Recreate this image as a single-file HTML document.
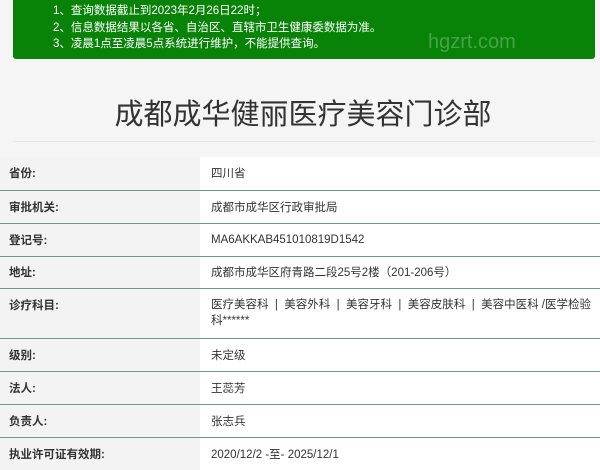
<!DOCTYPE html>
<html><head><meta charset="utf-8"><style>
body{margin:0;width:600px;height:463px;overflow:hidden;background:#f5f5f5;font-family:"Liberation Sans","Noto Sans CJK SC",sans-serif;}
td.l{background:#f3f3f3;padding-left:9px;font-weight:bold;border-bottom:1px solid #6b9a86}
td.v{background:#fff;padding-left:11px;border-bottom:1px solid #6b9a86}
</style></head><body>
<div style="position:absolute;left:13px;top:0;width:582px;height:59px;background:#088308;border-radius:0 0 3px 3px;"></div>
<div style="position:absolute;left:53px;top:3px;color:#fff;font-size:11.5px;line-height:16.5px;">
1、查询数据截止到2023年2月26日22时；<br>2、信息数据结果以各省、自治区、直辖市卫生健康委数据为准。<br>3、凌晨1点至凌晨5点系统进行维护，不能提供查询。</div>
<div style="position:absolute;left:428px;top:31px;color:rgba(255,255,255,0.25);font-size:20px;">hgzrt.com</div>
<div style="position:absolute;left:0;top:91px;width:606px;text-align:center;font-size:29px;color:#333;">成都成华健丽医疗美容门诊部</div>
<div style="position:absolute;left:13px;top:141px;width:582px;height:1px;background:#e6e6e6;"></div>
<div style="position:absolute;left:0;top:157px;width:600px;font-size:11.5px;color:#333;">
<table style="border-collapse:collapse;width:600px;">
<colgroup><col style="width:200px"><col></colgroup>
<tr style="height:33px"><td class="l">省份:</td><td class="v">四川省</td></tr>
<tr style="height:33px"><td class="l">审批机关:</td><td class="v">成都市成华区行政审批局</td></tr>
<tr style="height:33px"><td class="l">登记号:</td><td class="v">MA6AKKAB451010819D1542</td></tr>
<tr style="height:32px"><td class="l">地址:</td><td class="v">成都市成华区府青路二段25号2楼（201-206号）</td></tr>
<tr style="height:50px"><td class="l" style="vertical-align:top;padding-top:8px">诊疗科目:</td><td class="v" style="vertical-align:top;padding-top:8px;line-height:16px;padding-right:0">医疗美容科 &nbsp;| &nbsp;美容外科 &nbsp;| &nbsp;美容牙科 &nbsp;| &nbsp;美容皮肤科 &nbsp;| &nbsp;美容中医科 /医学检验 科******</td></tr>
<tr style="height:33px"><td class="l">级别:</td><td class="v">未定级</td></tr>
<tr style="height:33px"><td class="l">法人:</td><td class="v">王蕊芳</td></tr>
<tr style="height:33px"><td class="l">负责人:</td><td class="v">张志兵</td></tr>
<tr style="height:33px"><td class="l" style="border:0">执业许可证有效期:</td><td class="v" style="border:0">2020/12/2 -至- 2025/12/1</td></tr>
</table></div>
</body></html>
